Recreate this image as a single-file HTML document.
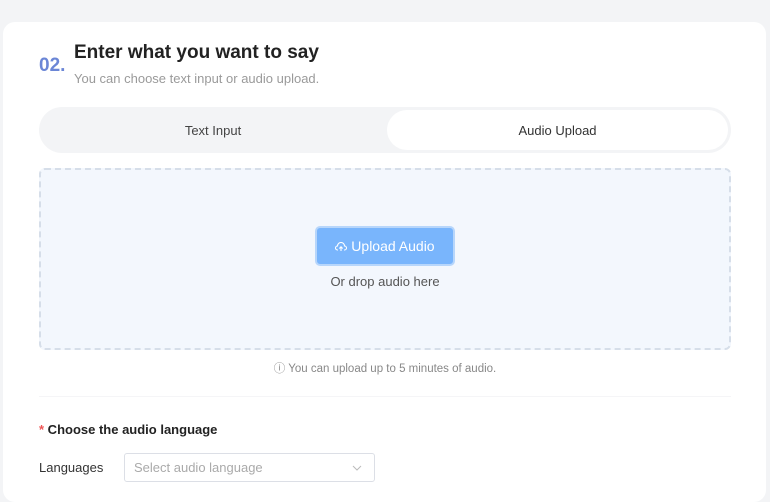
<!DOCTYPE html>
<html><head><style>
*{margin:0;padding:0;box-sizing:border-box}
body{width:770px;height:488px;background:#f3f4f6;font-family:"Liberation Sans",sans-serif;position:relative;overflow:hidden}
.card{position:absolute;left:3px;top:22px;width:763px;height:480px;background:#fff;border-radius:12px}
.a{position:absolute}
</style></head><body>
<div class="card"></div>
<div class="a" style="left:39px;top:55px;font-size:19px;font-weight:bold;color:#6b86d6">02.</div>
<div class="a" style="left:74px;top:42px;font-size:19px;font-weight:bold;color:#222">Enter what you want to say</div>
<div class="a" style="left:74px;top:71px;font-size:13px;color:#9a9a9a">You can choose text input or audio upload.</div>
<div class="a" style="left:39px;top:107px;width:692px;height:46px;background:#f3f4f6;border-radius:23px"></div>
<div class="a" style="left:387px;top:110px;width:341px;height:40px;background:#fff;border-radius:20px"></div>
<div class="a" style="left:39px;top:123px;width:348px;text-align:center;font-size:13px;color:#444">Text Input</div>
<div class="a" style="left:387px;top:123px;width:341px;text-align:center;font-size:13px;color:#333">Audio Upload</div>
<div class="a" style="left:39px;top:168px;width:692px;height:182px;background:#f3f7fd;border:2px dashed #d6dee9;border-radius:6px"></div>
<div class="a" style="left:315px;top:226px;width:140px;height:40px;background:#79b5fc;border:2px solid #b7d6fb;border-radius:5px;color:#fff;font-size:14px;text-align:center;line-height:36px">
<svg width="12" height="10" viewBox="0 0 12 10" style="vertical-align:-1px"><path d="M3 8H2.5A2 2 0 0 1 2.5 4 3.5 3.5 0 0 1 9.5 4 2 2 0 0 1 9.5 8H9M6 9V5M4.3 6.5 6 4.8 7.7 6.5" fill="none" stroke="#fff" stroke-width="1.1"/></svg> Upload Audio</div>
<div class="a" style="left:39px;top:274px;width:692px;text-align:center;font-size:13px;color:#555">Or drop audio here</div>
<div class="a" style="left:39px;top:360px;width:692px;text-align:center;font-size:11.5px;color:#888">ⓘ You can upload up to 5 minutes of audio.</div>
<div class="a" style="left:39px;top:396px;width:692px;height:1px;background:#f5f5f7"></div>
<div class="a" style="left:39px;top:422px;font-size:13px;font-weight:bold;color:#222"><span style="color:#e55">*</span> Choose the audio language</div>
<div class="a" style="left:39px;top:460px;font-size:13px;color:#333">Languages</div>
<div class="a" style="left:124px;top:453px;width:251px;height:29px;border:1px solid #dcdfe6;border-radius:3px;font-size:13px;color:#aaa;padding:6px 9px">Select audio language
<svg class="a" style="right:12px;top:11px" width="10" height="6" viewBox="0 0 10 6"><path d="M1 1 5 5 9 1" fill="none" stroke="#bbb"/></svg></div>
</body></html>
